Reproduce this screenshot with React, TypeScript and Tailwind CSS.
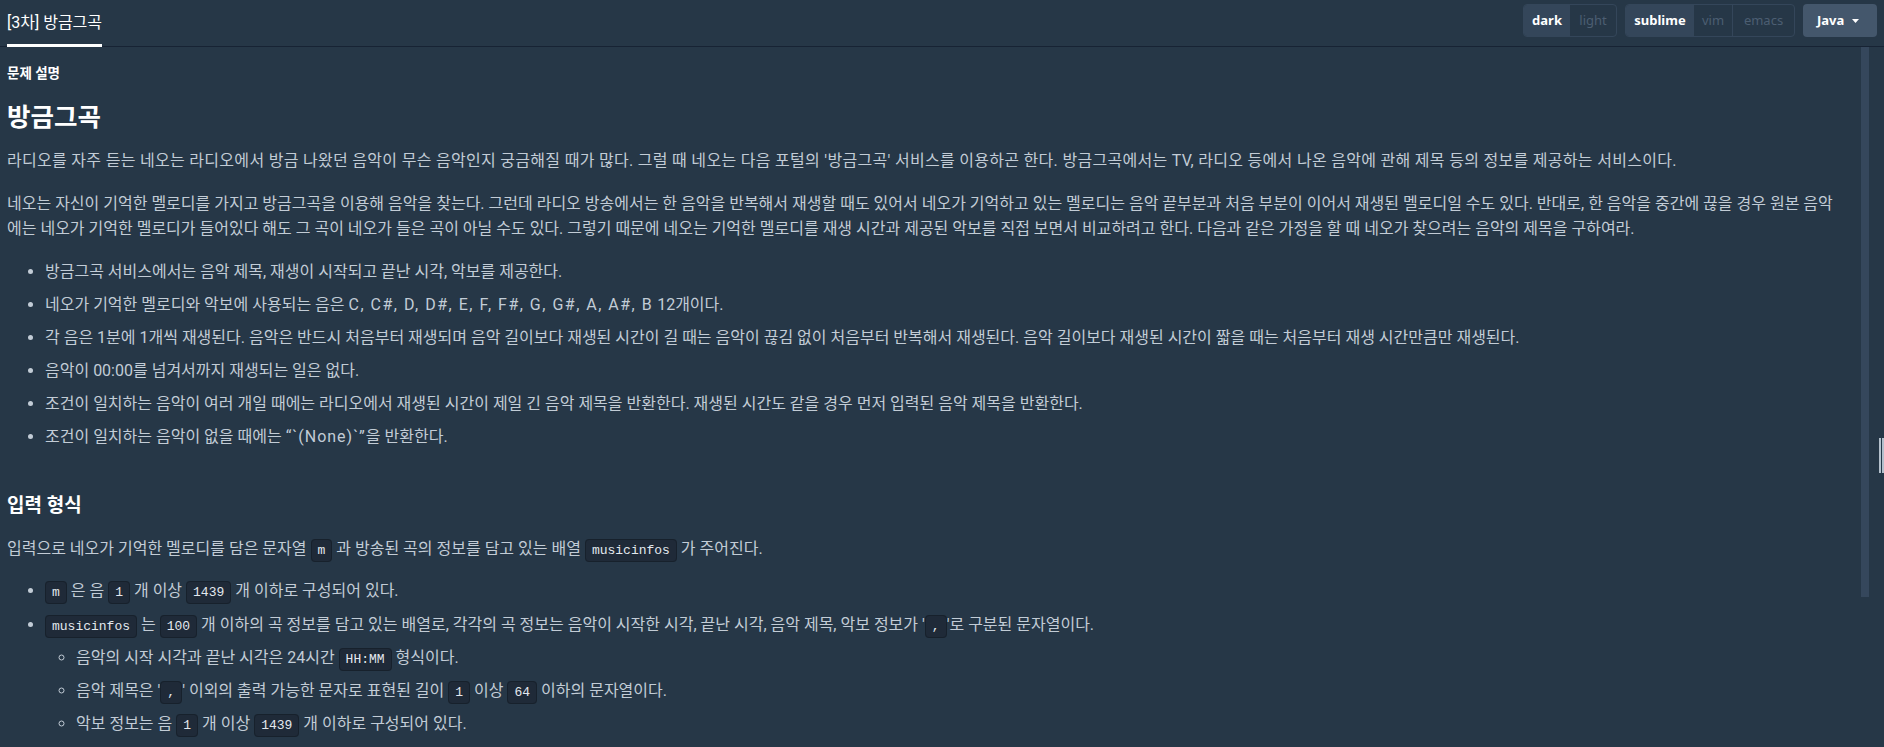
import React from "react";

const C = ({ children }: { children: React.ReactNode }) => (
  <code className="rounded-[4px] border border-[#17212c] bg-[#1f2a38] px-[6px] py-[3px] font-['Liberation_Mono',monospace] text-[13px] leading-[14px] text-[#e3e8ee]">
    {children}
  </code>
);

export default function App() {
  return (
    <div className="flex h-[747px] w-full flex-col overflow-hidden bg-[#263747] font-['Roboto','Noto_Sans_CJK_KR',sans-serif]">
      {/* header */}
      <div className="flex h-[47px] shrink-0 items-stretch justify-between border-b border-[#172334] pl-[7px] pr-[7px]">
        <div className="-mb-px flex items-center border-b-[3px] border-white pt-[2px] text-[16px] text-white">
          [3차] 방금그곡
        </div>
        <div className="flex items-start gap-[8px] pt-[4px] font-['Noto_Sans',sans-serif] text-[13px]">
          <div className="flex h-[33px] overflow-hidden rounded-[4px] border border-[#34465a]">
            <div className="flex w-[46px] items-center justify-center bg-[#34465a] font-bold text-white">dark</div>
            <div className="flex w-[46px] items-center justify-center text-[#4c5e72]">light</div>
          </div>
          <div className="flex h-[33px] overflow-hidden rounded-[4px] border border-[#34465a]">
            <div className="flex w-[68px] items-center justify-center bg-[#34465a] font-bold text-white">sublime</div>
            <div className="flex w-[39px] items-center justify-center border-r border-[#34465a] text-[#4c5e72]">vim</div>
            <div className="flex w-[61px] items-center justify-center text-[#4c5e72]">emacs</div>
          </div>
          <div className="flex h-[33px] w-[74px] items-center gap-[8px] rounded-[4px] bg-[#44576c] pl-[14px] font-bold text-white">
            <span>Java</span>
            <svg width="7" height="4" viewBox="0 0 7 4">
              <path d="M0 0 L7 0 L3.5 4 Z" fill="#ffffff" />
            </svg>
          </div>
        </div>
      </div>

      {/* body */}
      <div className="flex min-h-0 flex-1">
        <div className="min-w-0 flex-1 pl-[7px] pr-[17px] pt-[16px] text-[16px] leading-[25px] text-[#c2ccd6]">
          <div className="text-[13.5px] font-bold leading-[20px] text-white">문제 설명</div>
          <h1 className="mb-[15px] mt-[18px] text-[25.5px] font-bold leading-[32px] text-white">방금그곡</h1>
          <p className="mb-[18px] tracking-[0.3px]">
            라디오를 자주 듣는 네오는 라디오에서 방금 나왔던 음악이 무슨 음악인지 궁금해질 때가 많다. 그럴 때 네오는 다음 포털의 '방금그곡' 서비스를 이용하곤 한다. 방금그곡에서는 TV, 라디오 등에서 나온 음악에 관해 제목 등의 정보를 제공하는 서비스이다.
          </p>
          <p className="mb-[18px]">
            네오는 자신이 기억한 멜로디를 가지고 방금그곡을 이용해 음악을 찾는다. 그런데 라디오 방송에서는 한 음악을 반복해서 재생할 때도 있어서 네오가 기억하고 있는 멜로디는 음악 끝부분과 처음 부분이 이어서 재생된 멜로디일 수도 있다. 반대로, 한 음악을 중간에 끊을 경우 원본 음악에는 네오가 기억한 멜로디가 들어있다 해도 그 곡이 네오가 들은 곡이 아닐 수도 있다. 그렇기 때문에 네오는 기억한 멜로디를 재생 시간과 제공된 악보를 직접 보면서 비교하려고 한다. 다음과 같은 가정을 할 때 네오가 찾으려는 음악의 제목을 구하여라.
          </p>
          <ul className="mb-[44px] list-disc space-y-[8px] pl-[38px]">
            <li>방금그곡 서비스에서는 음악 제목, 재생이 시작되고 끝난 시각, 악보를 제공한다.</li>
            <li>
              네오가 기억한 멜로디와 악보에 사용되는 음은{" "}
              <span className="tracking-[1.5px]">C, C#, D, D#, E, F, F#, G, G#, A, A#, B</span> 12개이다.
            </li>
            <li>각 음은 1분에 1개씩 재생된다. 음악은 반드시 처음부터 재생되며 음악 길이보다 재생된 시간이 길 때는 음악이 끊김 없이 처음부터 반복해서 재생된다. 음악 길이보다 재생된 시간이 짧을 때는 처음부터 재생 시간만큼만 재생된다.</li>
            <li>음악이 00:00를 넘겨서까지 재생되는 일은 없다.</li>
            <li>조건이 일치하는 음악이 여러 개일 때에는 라디오에서 재생된 시간이 제일 긴 음악 제목을 반환한다. 재생된 시간도 같을 경우 먼저 입력된 음악 제목을 반환한다.</li>
            <li>
              조건이 일치하는 음악이 없을 때에는 <span className="tracking-[1px]">“`(None)`”</span>을 반환한다.
            </li>
          </ul>
          <h2 className="mb-[17px] text-[19px] font-bold leading-[26px] text-white">입력 형식</h2>
          <p className="mb-[17px]">
            입력으로 네오가 기억한 멜로디를 담은 문자열 <C>m</C> 과 방송된 곡의 정보를 담고 있는 배열 <C>musicinfos</C> 가 주어진다.
          </p>
          <ul className="list-disc space-y-[9px] pl-[38px]">
            <li>
              <C>m</C> 은 음 <C>1</C> 개 이상 <C>1439</C> 개 이하로 구성되어 있다.
            </li>
            <li>
              <C>musicinfos</C> 는 <C>100</C> 개 이하의 곡 정보를 담고 있는 배열로, 각각의 곡 정보는 음악이 시작한 시각, 끝난 시각, 음악 제목, 악보 정보가 '<C>,</C>'로 구분된 문자열이다.
              <ul className="mt-[8px] list-[circle] space-y-[8px] pl-[31px]">
                <li>
                  음악의 시작 시각과 끝난 시각은 24시간 <C>HH:MM</C> 형식이다.
                </li>
                <li>
                  음악 제목은 '<C>,</C>' 이외의 출력 가능한 문자로 표현된 길이 <C>1</C> 이상 <C>64</C> 이하의 문자열이다.
                </li>
                <li>
                  악보 정보는 음 <C>1</C> 개 이상 <C>1439</C> 개 이하로 구성되어 있다.
                </li>
              </ul>
            </li>
          </ul>
        </div>

        {/* scrollbar */}
        <div className="w-[8px] shrink-0">
          <div className="h-[550px] w-[8px] bg-[#35475c]" />
        </div>
        {/* splitter */}
        <div className="ml-[10px] flex w-[5px] shrink-0 items-start pt-[391px]">
          <div className="flex h-[35px] gap-[1px]">
            <div className="h-full w-[2px] bg-[#b4c0cc]" />
            <div className="h-full w-[2px] bg-[#b4c0cc]" />
          </div>
        </div>
      </div>
    </div>
  );
}
